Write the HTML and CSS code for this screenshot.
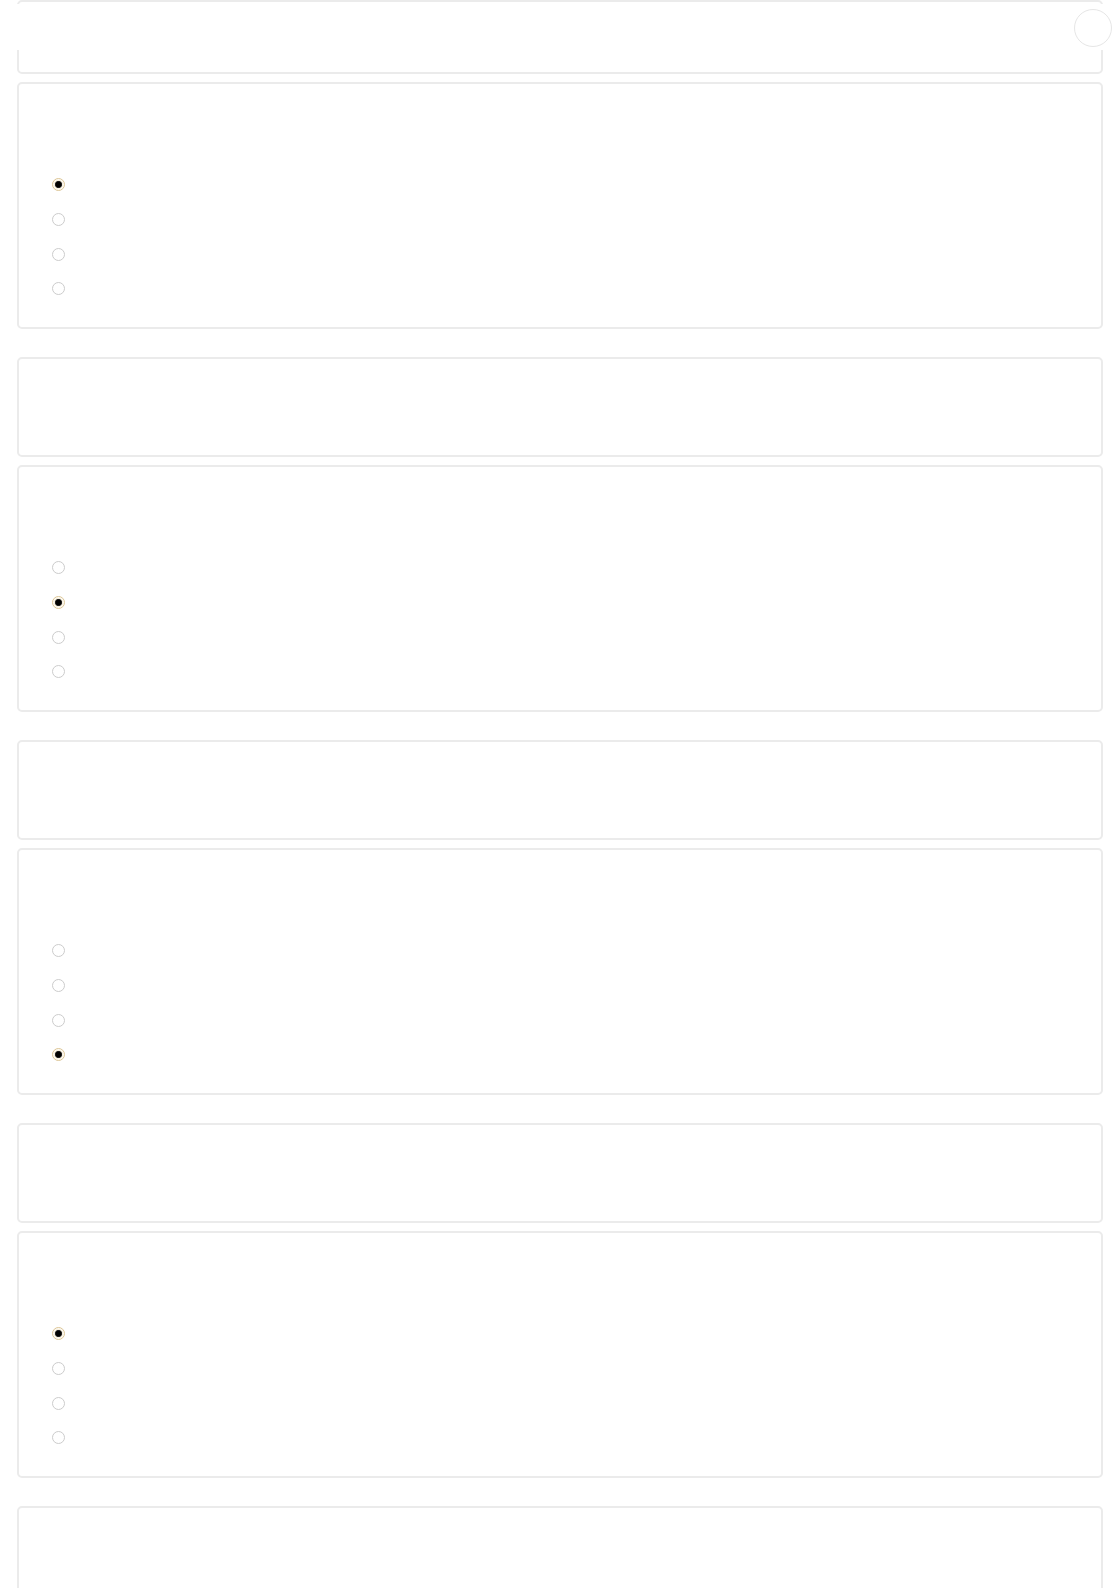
FILE: index.html
```html
<!DOCTYPE html>
<html lang="en">
<head>
<meta charset="utf-8">
<title>Quiz</title>
<link rel="stylesheet" href="styles.css">
</head>
<body>
<header class="topbar">
  <button class="round-btn" type="button" aria-label="Menu"></button>
</header>
<main class="page">
  <section class="card card-top"></section>

  <section class="group">
    <div class="card card-question">
      <div class="q-head"></div>
      <div class="options">
        <label class="option"><input type="radio" name="q1" checked></label>
        <label class="option"><input type="radio" name="q1"></label>
        <label class="option"><input type="radio" name="q1"></label>
        <label class="option"><input type="radio" name="q1"></label>
      </div>
    </div>
  </section>
  <section class="group">
    <div class="card card-answer"></div>
    <div class="card card-question">
      <div class="q-head"></div>
      <div class="options">
        <label class="option"><input type="radio" name="q2"></label>
        <label class="option"><input type="radio" name="q2" checked></label>
        <label class="option"><input type="radio" name="q2"></label>
        <label class="option"><input type="radio" name="q2"></label>
      </div>
    </div>
  </section>
  <section class="group">
    <div class="card card-answer"></div>
    <div class="card card-question">
      <div class="q-head"></div>
      <div class="options">
        <label class="option"><input type="radio" name="q3"></label>
        <label class="option"><input type="radio" name="q3"></label>
        <label class="option"><input type="radio" name="q3"></label>
        <label class="option"><input type="radio" name="q3" checked></label>
      </div>
    </div>
  </section>
  <section class="group">
    <div class="card card-answer"></div>
    <div class="card card-question">
      <div class="q-head"></div>
      <div class="options">
        <label class="option"><input type="radio" name="q4" checked></label>
        <label class="option"><input type="radio" name="q4"></label>
        <label class="option"><input type="radio" name="q4"></label>
        <label class="option"><input type="radio" name="q4"></label>
      </div>
    </div>
  </section>
  <section class="group">
    <div class="card card-answer"></div>
  </section>
</main>
</body>
</html>
```

FILE: styles.css
```css
* { box-sizing: border-box; }

html, body {
  margin: 0;
  padding: 0;
  background: #ffffff;
  font-family: "Liberation Sans", Arial, sans-serif;
}

.topbar {
  position: fixed;
  top: 4px;
  left: 0;
  right: 0;
  height: 46px;
  background: #ffffff;
  z-index: 10;
}

.round-btn {
  position: absolute;
  top: 5px;
  right: 8px;
  width: 38px;
  height: 38px;
  border-radius: 50%;
  border: 1px solid #e6e6e6;
  background: #ffffff;
  padding: 0;
}

.page {
  padding: 0 17px;
  display: flex;
  flex-direction: column;
}

.card {
  border: 2px solid #ebebeb;
  border-radius: 5px;
  background: #ffffff;
}

.card-top {
  height: 74px;
  margin-bottom: 8px;
}

.group {
  display: flex;
  flex-direction: column;
  gap: 8px;
  margin-bottom: 28px;
}

.card-question {
  height: 247px;
  padding: 24px 33px 0;
}

.q-head {
  height: 59.67px;
}

.card-answer {
  height: 100px;
}

.options {
  display: flex;
  flex-direction: column;
}

.option {
  height: 34.67px;
  display: flex;
  align-items: center;
}

.option input {
  appearance: none;
  -webkit-appearance: none;
  width: 13px;
  height: 13px;
  margin: 0;
  border: 1px solid #cccccc;
  border-radius: 50%;
  background: #ffffff;
}

.option input:checked {
  border-color: #dcc595;
  background: radial-gradient(circle at 50% 50%, #000000 0, #000000 2.6px, #2a2a2a 3.2px, #f6eedb 4px, #ffffff 5.5px);
}
```
